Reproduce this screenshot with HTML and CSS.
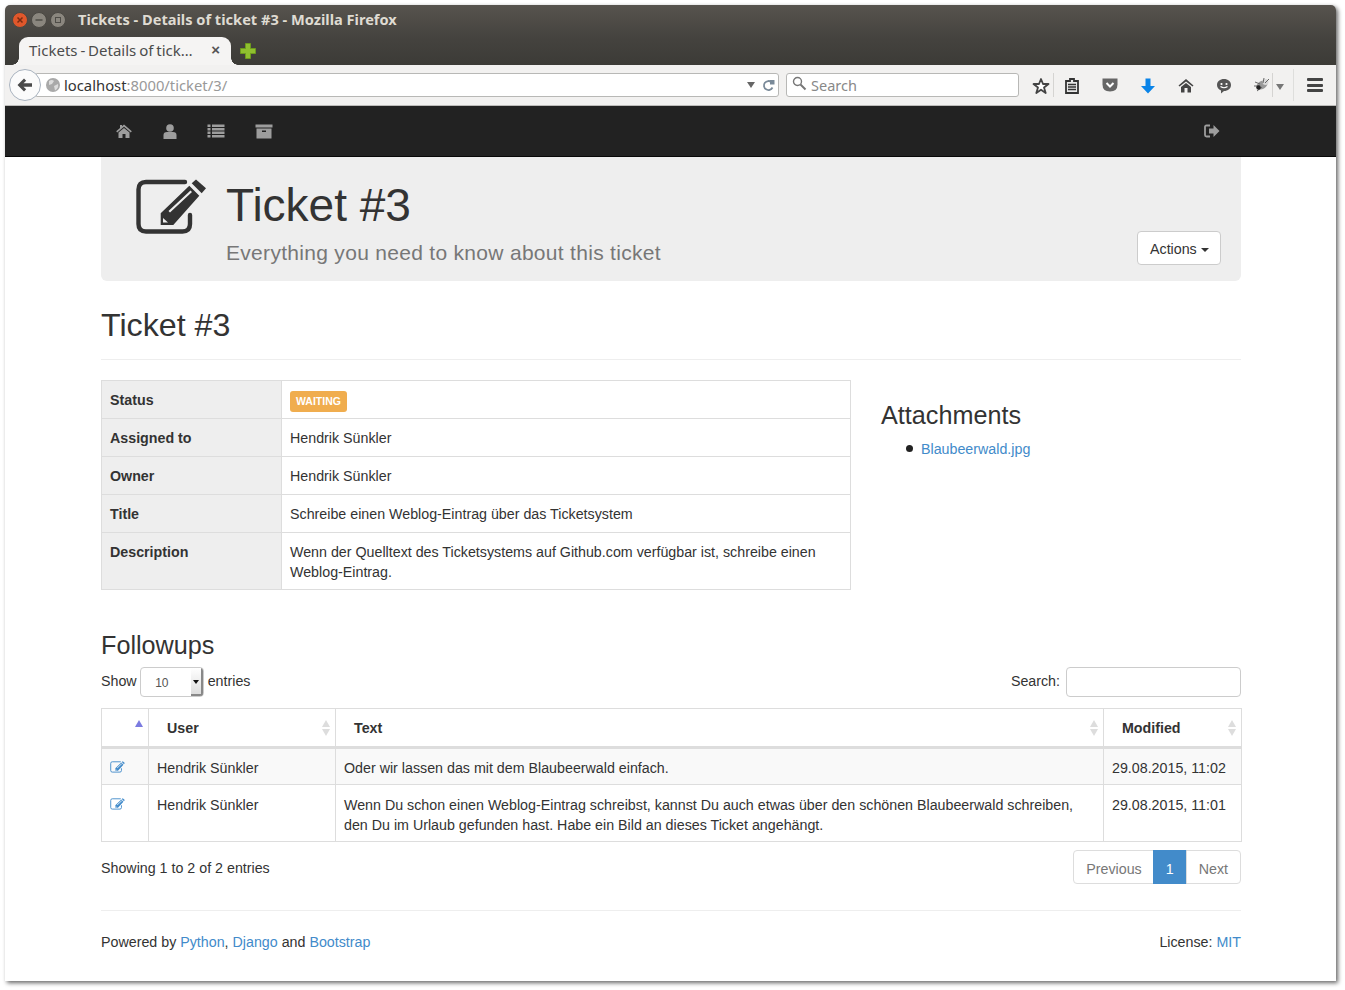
FILE: index.html
```html
<!DOCTYPE html>
<html lang="en">
<head>
<meta charset="utf-8">
<title>Tickets - Details of ticket #3</title>
<link rel="stylesheet" href="styles.css">
</head>
<body>
<svg class="defs" width="0" height="0" aria-hidden="true">
  <symbol id="edit" viewBox="0 0 72 56">
    <path d="M50 3H11Q3.500 3 3.500 10.500V45Q3.500 52.500 11 52.500H47.500Q55 52.500 55 45V36" fill="none" stroke="currentColor" stroke-width="4.400" stroke-linecap="round"/>
    <path d="M56.700 4.300L61 0.500L71 9.300L66.700 14.300Z" fill="currentColor"/>
    <path fill-rule="evenodd" fill="currentColor" d="M54.300 6.700L64.300 16.700L38.300 46H25.700V34.300ZM55.500 11.500L33.500 32L35 33.500L57 13ZM28 39L28 43.500L33 43.500Z"/>
  </symbol>
</svg>
<div class="window">
  <header class="titlebar">
    <div class="controls">
      <svg width="16" height="16" viewBox="0 0 16 16"><circle cx="8" cy="8" r="7.500" fill="#e0572b" stroke="#4a4843"/><path d="M5.500 5.500L10.500 10.500M10.500 5.500L5.500 10.500" stroke="#7a2c12" stroke-width="1.500"/></svg>
      <svg width="16" height="16" viewBox="0 0 16 16"><circle cx="8" cy="8" r="7.500" fill="#8a867e" stroke="#4a4843"/><path d="M4.500 8H11.500" stroke="#4e4c47" stroke-width="1.500"/></svg>
      <svg width="16" height="16" viewBox="0 0 16 16"><circle cx="8" cy="8" r="7.500" fill="#8a867e" stroke="#4a4843"/><rect x="5.500" y="5.500" width="5" height="5" fill="none" stroke="#4e4c47"/></svg>
    </div>
    <span class="wintitle">Tickets - Details of ticket #3 - Mozilla Firefox</span>
  </header>
  <div class="tabstrip">
    <div class="tab"><span class="tabtext">Tickets - Details of tick…</span><span class="tabclose">×</span></div>
    <svg class="newtab" width="16" height="16" viewBox="0 0 16 16"><path d="M5.500 0.500H10.500V5.500H15.500V10.500H10.500V15.500H5.500V10.500H0.500V5.500H5.500Z" fill="#8fbf2f" stroke="#6d9a1d"/></svg>
  </div>
  <div class="toolbar">
    <div class="back"><svg width="16" height="14" viewBox="0 0 16 14"><path d="M7 0.500L0.500 7L7 13.500L9.200 11.300L6.500 8.700H15V5.300H6.500L9.200 2.700Z" fill="#4a4a4a"/></svg></div>
    <div class="urlbar">
      <svg class="globe" width="14" height="14" viewBox="0 0 14 14"><circle cx="7" cy="7" r="7" fill="#a9a9a9"/><path d="M3 3Q6 1 8 3L6 6L3 7ZM8 8L12 6Q13 10 9 12.500Z" fill="#dcdcdc"/></svg>
      <span class="host">localhost</span><span class="path">:8000/ticket/3/</span>
      <span class="urlspacer"></span>
      <span class="urlarrow"></span>
      <svg class="reload" width="13" height="13" viewBox="0 0 13 13"><path d="M9.500 3.200A4.500 4.500 0 1 0 10.500 8.500" fill="none" stroke="#7a8a99" stroke-width="1.800"/><path d="M8 1V5.500H12.500V1Z" fill="#7a8a99"/></svg>
    </div>
    <div class="searchbar">
      <svg width="15" height="15" viewBox="0 0 15 15"><circle cx="5.500" cy="5.500" r="4" fill="none" stroke="#777" stroke-width="1.400"/><path d="M8.500 8.500L13.500 13.500" stroke="#777" stroke-width="2"/></svg>
      <span>Search</span>
    </div>
    <div class="tools">
      <svg class="t-star" width="18" height="18" viewBox="0 0 18 18"><path d="M9 2L11 7H16.500L12 10.500L13.700 16L9 12.700L4.300 16L6 10.500L1.500 7H7Z" fill="#fff" stroke="#444" stroke-width="1.800" stroke-linejoin="round"/></svg>
      <span class="t-sep"></span>
      <svg class="t-clip" width="14" height="16" viewBox="0 0 14 16"><path d="M1 3H5V1H9V3H13V15H1Z" fill="#e8e8e8" stroke="#333" stroke-width="1.800"/><path d="M3 6.500H11M3 9H11M3 11.500H11" stroke="#333" stroke-width="1.400"/></svg>
      <svg class="t-pocket" width="16" height="14" viewBox="0 0 16 14"><path d="M0.500 0.500H15.500V6.500Q15.500 13.500 8 13.500Q0.500 13.500 0.500 6.500Z" fill="#666"/><path d="M4.500 5L8 8.500L11.500 5" fill="none" stroke="#fff" stroke-width="2"/></svg>
      <svg class="t-down" width="16" height="16" viewBox="0 0 16 16"><path d="M5.500 0.500H10.500V8H15L8 15.500L1 8H5.500Z" fill="#0a84e8"/></svg>
      <svg class="t-home" width="16" height="15" viewBox="0 0 16 15"><path d="M8 1L15.500 7.500L14.500 8.500L8 3.500L1.500 8.500L0.500 7.500Z" fill="#444"/><path d="M3 9L8 5L13 9V14.500H9.500V10H6.500V14.500H3Z" fill="#444"/></svg>
      <svg class="t-chat" width="16" height="16" viewBox="0 0 16 16"><path d="M8 1C12 1 15 3.500 15 7S12 13 8 13L5 15.500V12.500C2.500 11.500 1 9.500 1 7C1 3.500 4 1 8 1Z" fill="#555"/><circle cx="5.500" cy="6" r="1.100" fill="#fff"/><circle cx="10.500" cy="6" r="1.100" fill="#fff"/><path d="M4.500 8.500Q8 11 11.500 8.500" fill="none" stroke="#fff" stroke-width="1.200"/></svg>
      <svg class="t-bug" width="16" height="14" viewBox="0 0 16 14"><ellipse cx="8" cy="7" rx="6" ry="4" fill="#999" transform="rotate(-30 8 7)"/><circle cx="11.500" cy="4" r="3" fill="#d8d8d8"/><path d="M1 4L6 6M3 13L8 9M0 8L6 8M10 0L9 5M15 1L11 5" stroke="#666"/><circle cx="4.500" cy="9.500" r="2.200" fill="#222"/></svg>
      <span class="t-sep2"></span>
      <span class="t-arrow"></span>
      <span class="t-sep3"></span>
      <span class="t-menu"><i></i><i></i><i></i></span>
    </div>
  </div>
  <nav class="navbar">
    <div class="navleft">
      <svg class="n-home" width="16" height="14" viewBox="0 0 16 14"><path d="M8 0.500L15.800 7.200L14.800 8.400L8 2.800L1.200 8.400L0.200 7.200L4 4V1H6V2.200Z" fill="currentColor"/><path d="M2.500 8.500L8 4L13.500 8.500V14H9.500V10H6.500V14H2.500Z" fill="currentColor"/></svg>
      <svg width="14" height="15" viewBox="0 0 14 15"><circle cx="7" cy="4" r="3.800" fill="currentColor"/><path d="M0.500 15V11Q0.500 8 4 8H10Q13.500 8 13.500 11V15Z" fill="currentColor"/></svg>
      <svg width="18" height="14" viewBox="0 0 18 14"><path d="M0.500 0.500H3.500V3H0.500ZM5 0.500H17.500V3H5ZM0.500 4H3.500V6.500H0.500ZM5 4H17.500V6.500H5ZM0.500 7.500H3.500V10H0.500ZM5 7.500H17.500V10H5ZM0.500 11H3.500V13.500H0.500ZM5 11H17.500V13.500H5Z" fill="currentColor"/></svg>
      <svg width="18" height="15" viewBox="0 0 18 15"><path d="M0.500 0.500H17.500V3.500H0.500ZM1.500 4.500H16.500V14.500H1.500Z" fill="currentColor"/><path d="M7 6.500H11V8H7Z" fill="#222"/></svg>
    </div>
    <svg class="navright" width="16" height="14" viewBox="0 0 16 14"><path d="M6 1.500H2.500Q1 1.500 1 3V11Q1 12.500 2.500 12.500H6" fill="none" stroke="currentColor" stroke-width="1.800"/><path d="M5 4.500H9.500V1L15.500 7L9.500 13V9.500H5Z" fill="currentColor"/></svg>
  </nav>
  <main class="container">
    <section class="jumbotron">
      <svg class="jicon" width="72" height="56"><use href="#edit"/></svg>
      <div class="jtext">
        <h1>Ticket #3</h1>
        <p>Everything you need to know about this ticket</p>
      </div>
      <button class="btn-actions">Actions <span class="caret"></span></button>
    </section>
    <h2 class="page-header">Ticket #3</h2>
    <div class="details">
      <table class="info">
        <tr class="row-status"><th>Status</th><td><span class="label">WAITING</span></td></tr>
        <tr><th>Assigned to</th><td>Hendrik Sünkler</td></tr>
        <tr><th>Owner</th><td>Hendrik Sünkler</td></tr>
        <tr><th>Title</th><td>Schreibe einen Weblog-Eintrag über das Ticketsystem</td></tr>
        <tr><th>Description</th><td>Wenn der Quelltext des Ticketsystems auf Github.com verfügbar ist, schreibe einen Weblog-Eintrag.</td></tr>
      </table>
      <aside class="attachments">
        <h3>Attachments</h3>
        <ul><li><a href="#">Blaubeerwald.jpg</a></li></ul>
      </aside>
    </div>
    <h3 class="followups">Followups</h3>
    <div class="dt-top">
      <div class="dt-length">Show <span class="select"><span class="selval">10</span><span class="selbtn"></span></span> entries</div>
      <div class="dt-search">Search: <span class="searchinput"></span></div>
    </div>
    <table class="followtable">
      <colgroup><col class="c1"><col class="c2"><col class="c3"><col class="c4"></colgroup>
      <thead>
        <tr>
          <th><span class="sort-up"></span></th>
          <th>User<span class="sort"></span></th>
          <th>Text<span class="sort"></span></th>
          <th>Modified<span class="sort"></span></th>
        </tr>
      </thead>
      <tbody>
        <tr class="odd">
          <td><svg class="editicon" width="15" height="12"><use href="#edit"/></svg></td>
          <td>Hendrik Sünkler</td>
          <td>Oder wir lassen das mit dem Blaubeerwald einfach.</td>
          <td>29.08.2015, 11:02</td>
        </tr>
        <tr>
          <td><svg class="editicon" width="15" height="12"><use href="#edit"/></svg></td>
          <td>Hendrik Sünkler</td>
          <td>Wenn Du schon einen Weblog-Eintrag schreibst, kannst Du auch etwas über den schönen Blaubeerwald schreiben, den Du im Urlaub gefunden hast. Habe ein Bild an dieses Ticket angehängt.</td>
          <td>29.08.2015, 11:01</td>
        </tr>
      </tbody>
    </table>
    <div class="dt-bottom">
      <div class="dt-info">Showing 1 to 2 of 2 entries</div>
      <div class="pagination"><span class="pg prev">Previous</span><span class="pg cur">1</span><span class="pg next">Next</span></div>
    </div>
    <footer class="footer">
      <div>Powered by <a href="#">Python</a>, <a href="#">Django</a> and <a href="#">Bootstrap</a></div>
      <div>License: <a href="#">MIT</a></div>
    </footer>
  </main>
</div>
</body>
</html>
```

FILE: styles.css
```css
* { box-sizing: border-box; }
html, body { margin: 0; padding: 0; background: #fff; }
body { padding: 5px 9px 0 5px; height: 990px; overflow: hidden; font: 14.250px/20px "Liberation Sans", Arial, sans-serif; color: #333; }
.defs { position: absolute; }
a { color: #428bca; text-decoration: none; }

.window { width: 1331px; height: 976px; background: #fff; box-shadow: 2px 2px 4px rgba(0,0,0,.6); border-radius: 5px 5px 0 0; }

.titlebar { height: 32px; display: flex; align-items: center; background: linear-gradient(#57534e, #45433f); border-radius: 5px 5px 0 0; padding: 0 0 4px 7px; }
.controls { display: flex; gap: 3px; width: 66px; }
.controls svg { margin-top: 2px; }
.wintitle { font: bold 14.600px/20px "Noto Sans", sans-serif; color: #dfdbd2; }

.tabstrip { height: 28px; display: flex; align-items: flex-end; background: linear-gradient(#45433f, #3c3b37); padding-left: 14px; }
.tab { width: 212px; height: 28px; background: #f5f4f3; border-radius: 9px 9px 0 0; display: flex; align-items: center; justify-content: space-between; padding: 0 11px 2px 10px; position: relative; }
.tab::before, .tab::after { content: ""; position: absolute; bottom: 0; width: 7px; height: 7px; }
.tab::before { left: -7px; background: radial-gradient(circle at 0 0, transparent 6.500px, #f5f4f3 7px); }
.tab::after { right: -7px; background: radial-gradient(circle at 100% 0, transparent 6.500px, #f5f4f3 7px); }
.tabtext { font: 15px/20px "Noto Sans", sans-serif; color: #4c4c4c; white-space: nowrap; word-spacing: -1px; }
.tabclose { font: bold 15px/20px "Liberation Sans", sans-serif; color: #555; }
.newtab { margin: 0 0 6px 9px; }

.toolbar { height: 41px; background: #f2f1f0; border-bottom: 1px solid #bdbcba; display: flex; align-items: center; padding: 0 0 0 4px; }
.back { width: 32px; height: 32px; border-radius: 50%; background: #fbfbfb; border: 1px solid #a9b3bf; display: flex; align-items: center; justify-content: center; position: relative; z-index: 1; flex: none; }
.urlbar { width: 743px; height: 24px; margin-left: -5px; background: #fff; border: 1px solid #b8b8b6; border-radius: 0 3px 3px 0; display: flex; align-items: center; padding-left: 9px; font: 14.800px/20px "Noto Sans", sans-serif; }
.globe { margin-right: 4px; flex: none; }
.host { color: #333; }
.path { color: #999; }
.urlspacer { flex: 1; }
.urlarrow { width: 0; height: 0; border: 4px solid transparent; border-top: 6px solid #666; border-bottom: 0; margin-right: 7px; }
.reload { margin-right: 3px; }
.searchbar { width: 233px; height: 24px; margin-left: 7px; background: #fff; border: 1px solid #b8b8b6; border-radius: 3px; display: flex; align-items: center; gap: 4px; padding-left: 5px; font: 14.500px/20px "Noto Sans", sans-serif; color: #888; }
.searchbar svg { margin-top: -3px; }
.tools { position: relative; flex: 1; height: 40px; }
.tools > * { position: absolute; }
.t-star { left: 13px; top: 12px; }
.t-sep { left: 34px; top: 8px; width: 1px; height: 24px; background: #d5d4d2; }
.t-clip { left: 46px; top: 13px; }
.t-pocket { left: 83px; top: 13px; }
.t-down { left: 121px; top: 13px; }
.t-home { left: 159px; top: 13px; }
.t-chat { left: 197px; top: 13px; }
.t-bug { left: 235px; top: 13px; }
.t-sep2 { left: 253px; top: 8px; width: 1px; height: 24px; background: #d5d4d2; }
.t-arrow { left: 257px; top: 19px; width: 0; height: 0; border: 4px solid transparent; border-top: 6px solid #777; border-bottom: 0; }
.t-sep3 { left: 274px; top: 4px; width: 1px; height: 32px; background: #dededc; }
.t-menu { left: 288px; top: 13px; width: 16px; height: 14px; display: flex; flex-direction: column; justify-content: space-between; }
.t-menu i { display: block; height: 3px; background: #444; border-radius: 1px; }

.navbar { height: 51px; background: #222; border-bottom: 1px solid #080808; display: flex; align-items: center; justify-content: space-between; padding: 0 116px 0 111px; color: #9d9d9d; }
.navleft { display: flex; align-items: center; gap: 30px; }
.n-home { margin-right: 1px; }

.container { width: 1140px; margin-left: 96px; }
.jumbotron { height: 124px; background: #eee; border-radius: 0 0 6px 6px; display: flex; position: relative; padding: 23px 0 0 34px; }
.jicon { color: #333; flex: none; margin-top: -1px; }
.jtext { margin-left: 19px; }
.jtext h1 { margin: 0; font-size: 46px; line-height: 51px; font-weight: 400; }
.jtext p { margin: 7px 0 0; font-size: 21px; line-height: 30px; color: #777; font-weight: 400; letter-spacing: .3px; }
.btn-actions { position: absolute; right: 20px; bottom: 16px; width: 84px; height: 34px; padding: 1px 0 0 12px; text-align: left; background: #fff; border: 1px solid #ccc; border-radius: 4px; font: 14.250px/20px "Liberation Sans", sans-serif; color: #333; white-space: nowrap; }
.caret { display: inline-block; width: 0; height: 0; margin-left: 0; vertical-align: middle; border-top: 4px solid #333; border-left: 4px solid transparent; border-right: 4px solid transparent; }

.page-header { margin: 24px 0 20px; padding-bottom: 15px; border-bottom: 1px solid #eee; font-size: 32.200px; line-height: 40px; font-weight: 400; height: 55px; }

.details { display: flex; }
table { border-collapse: collapse; }
.info { width: 750px; border: 1px solid #ddd; table-layout: fixed; height: 210px; }
.info th, .info td { border: 1px solid #ddd; padding: 9px 8px 7px; text-align: left; vertical-align: top; line-height: 20px; }
.info th { width: 180px; background: #eee; font-weight: 700; }
.info tr { height: 38px; }
.info .row-status td { padding: 10px 8px 0; }
.label { display: block; width: 57px; height: 21px; background: #f0ad4e; color: #fff; border-radius: 3px; font-size: 10.500px; font-weight: 700; line-height: 21px; text-align: center; }

.attachments { margin-left: 30px; }
.attachments h3 { margin: 20px 0 8px; font-size: 25.200px; line-height: 31px; font-weight: 400; }
.attachments ul { margin: 0; padding-left: 40px; list-style: none; }
.attachments li { line-height: 20px; position: relative; }
.attachments li::before { content: ""; position: absolute; left: -15px; top: 6px; width: 7px; height: 7px; border-radius: 50%; background: #222; }

.followups { margin: 40px 0 0; font-size: 25.200px; line-height: 31px; font-weight: 400; }
.dt-top { display: flex; justify-content: space-between; height: 36px; margin-top: 6px; }
.dt-length { display: flex; align-items: flex-start; gap: 3.500px; line-height: 28px; }
.select { width: 64px; height: 30px; border: 1px solid #ccc; border-radius: 4px; background: #fff; display: flex; justify-content: space-between; font-size: 12px; line-height: 31px; color: #555; overflow: hidden; }
.selval { padding-left: 14px; }
.selbtn { width: 12px; background: linear-gradient(#fff, #ddd); border-right: 2px solid #888; border-bottom: 2px solid #888; position: relative; }
.selbtn::after { content: ""; position: absolute; left: 2px; top: 12px; border: 3px solid transparent; border-top: 4px solid #111; border-bottom: 0; }
.dt-search { display: flex; align-items: flex-start; gap: 6px; line-height: 28px; }
.searchinput { width: 175px; height: 30px; border: 1px solid #ccc; border-radius: 4px; background: #fff; }

.followtable { width: 1140px; margin-top: 5px; table-layout: fixed; border: 1px solid #ddd; }
.c1 { width: 47px; } .c2 { width: 187px; } .c3 { width: 768px; } .c4 { width: 138px; }
.followtable th, .followtable td { border: 1px solid #ddd; vertical-align: top; text-align: left; }
.followtable th { position: relative; height: 37px; padding: 9px 18px 8px; border-bottom: 3px solid #ddd; font-weight: 700; }
.followtable td { padding: 10px 8px 6px; }
.followtable tbody tr:first-child td { padding: 9px 8px 6px; height: 37px; }
.odd td { background: #f9f9f9; }
.sort, .sort-up { position: absolute; }
.sort { right: 5px; top: 11px; width: 8px; height: 16px; }
.sort::before, .sort::after { content: ""; position: absolute; left: 0; border: 4px solid transparent; }
.sort::before { top: 0; border-top: 0; border-bottom: 7px solid #ddd; }
.sort::after { bottom: 0; border-bottom: 0; border-top: 7px solid #ddd; }
.sort-up { right: 5px; top: 11px; border: 4px solid transparent; border-top: 0; border-bottom: 7px solid #7b7be0; }
.editicon { color: #428bca; margin-top: 3px; display: block; }

.dt-bottom { display: flex; justify-content: space-between; margin-top: 8px; }
.dt-info { padding-top: 8px; }
.pagination { display: flex; height: 34px; }
.pg { padding: 8px 12px 5px; border: 1px solid #ddd; margin-left: -1px; color: #777; background: #fff; }
.prev { border-radius: 4px 0 0 4px; padding-right: 11px; }
.cur { background: #428bca; border-color: #428bca; color: #fff; }
.next { border-radius: 0 4px 4px 0; }

.footer { margin-top: 26px; padding-top: 21px; border-top: 1px solid #eee; display: flex; justify-content: space-between; }
```
